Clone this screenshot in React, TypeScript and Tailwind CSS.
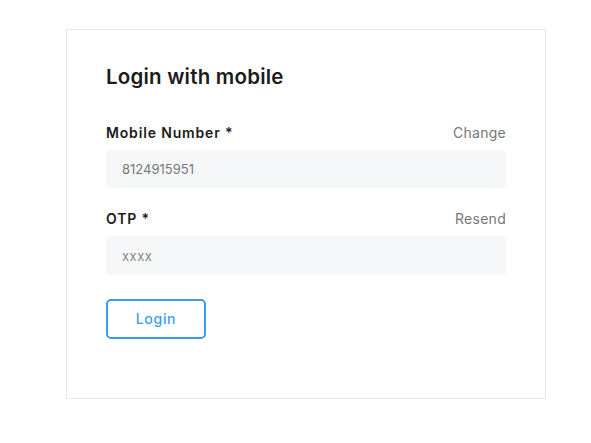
export default function App() {
  return (
    <div className="min-h-screen bg-white pt-[29px] pl-[66px]" style={{ fontFamily: "Inter, 'Noto Sans', sans-serif" }}>
      <div className="w-[480px] h-[370px] border border-[#e6e6e6] bg-white px-[39px] pt-[33px]">
        <h2 className="text-[20.5px] leading-[28px] font-semibold tracking-[0.01em] text-[#1b1b1b]">Login with mobile</h2>

        <div className="mt-[31px] flex items-center justify-between h-5">
          <label className="text-[14px] font-semibold tracking-[0.06em] text-[#1b1b1b]">Mobile Number *</label>
          <button className="text-[14px] tracking-[0.02em] text-[#777]">Change</button>
        </div>
        <input
          className="mt-[8px] w-full h-[38px] rounded bg-[#f6f7f8] px-4 text-[13px] text-[#777] outline-none"
          defaultValue="8124915951"
        />

        <div className="mt-[20px] flex items-center justify-between h-5">
          <label className="text-[14px] font-semibold tracking-[0.06em] text-[#1b1b1b]">OTP *</label>
          <button className="text-[14px] tracking-[0.02em] text-[#777]">Resend</button>
        </div>
        <input
          className="mt-[8px] w-full h-[39px] rounded bg-[#f6f7f8] px-4 text-[13px] tracking-[0.04em] text-[#777] outline-none placeholder:text-[#888]"
          placeholder="xxxx"
        />

        <button className="mt-[24px] w-[100px] h-[40px] rounded-[5px] border-2 border-[#3d9be9] pb-[1px] text-[14px] font-medium tracking-[0.05em] text-[#3d9be9]">
          Login
        </button>
      </div>
    </div>
  );
}
